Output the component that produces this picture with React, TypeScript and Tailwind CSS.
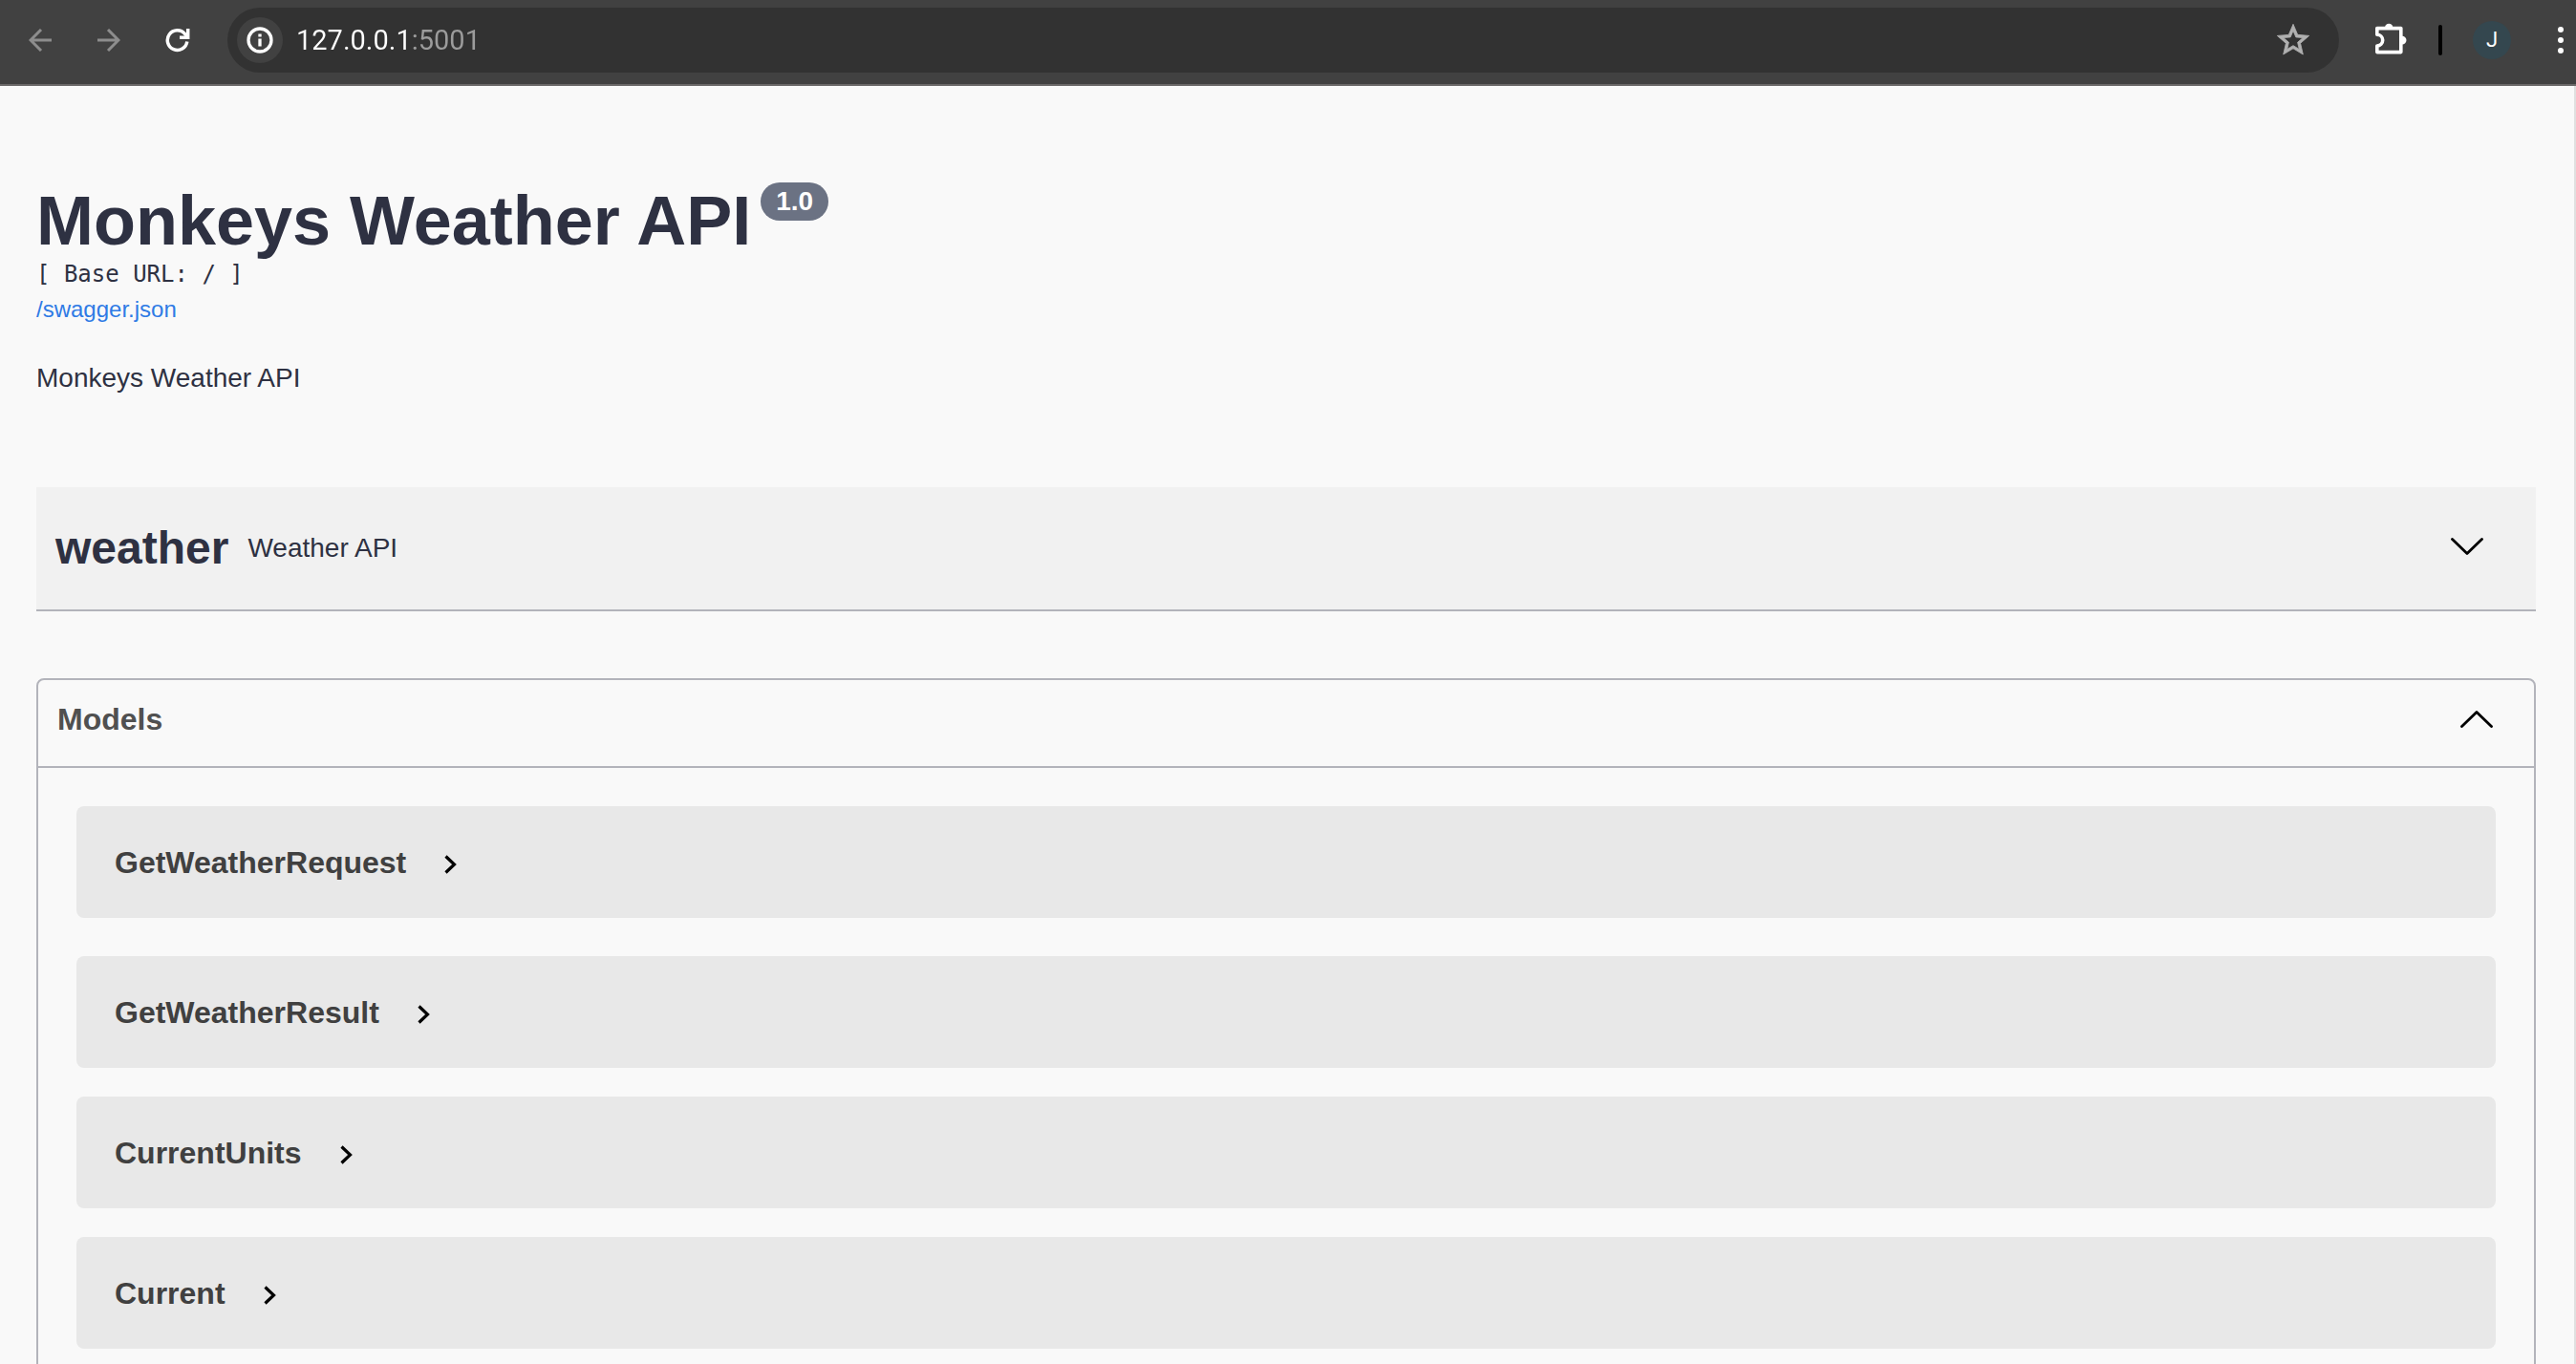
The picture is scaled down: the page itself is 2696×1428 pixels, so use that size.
import { useState } from "react";

const models = ["GetWeatherRequest", "GetWeatherResult", "CurrentUnits", "Current"];

const iconButton = "flex h-12 items-center justify-center";

function BrowserBar() {
  return (
    <header className="flex h-[90px] shrink-0 items-center border-b-2 border-[#6b6969] bg-[#414141] pb-1 pl-[6px]">
      <button aria-label="Back" className={`${iconButton} w-[72px]`}>
        <svg width="24" height="24" viewBox="0 0 24 24" fill="none" stroke="#8d8d8d" strokeWidth="3">
          <path d="M24 12H2.5M13 1L2 12l11 11" />
        </svg>
      </button>
      <button aria-label="Forward" className={`${iconButton} w-[72px]`}>
        <svg width="24" height="24" viewBox="0 0 24 24" fill="none" stroke="#8d8d8d" strokeWidth="3">
          <path d="M0 12h21.500M11 1l11 11-11 11" />
        </svg>
      </button>
      <button aria-label="Reload" className={`${iconButton} w-[72px]`}>
        <svg width="26" height="26" viewBox="0 0 26 26" fill="none" stroke="#ffffff" strokeWidth="3.500">
          <path d="M22.800 14.500A10.300 10.300 0 1 1 20.500 6.500L22.500 8.500" />
          <path d="M23.700 1v9.200h-8.700" />
        </svg>
      </button>
      <div className="ml-4 flex h-[68px] flex-1 items-center rounded-full bg-[#323232] px-[10px]">
        <button aria-label="View site information" className="flex size-12 items-center justify-center rounded-full bg-[#414141]">
          <svg width="28" height="28" viewBox="0 0 28 28" fill="none" stroke="#ffffff" strokeWidth="3.300">
            <circle cx="14" cy="14" r="12" />
            <path d="M14 12.500v8M14 7.500v3" />
          </svg>
        </button>
        <input
          aria-label="Address"
          defaultValue="127.0.0.1:5001"
          className="ml-[14px] min-w-0 flex-1 bg-[linear-gradient(90deg,#ffffff_120px,#9c9c9c_120px)] bg-clip-text font-['Roboto',sans-serif] text-[29px] leading-9 text-transparent caret-white outline-none"
        />
        <button aria-label="Bookmark this tab" className={`${iconButton} mr-[14px] w-12`}>
          <svg width="40" height="40" viewBox="0 0 24 24" fill="#b0b0b0" stroke="#b0b0b0" strokeWidth="0.500">
            <path d="M22 9.240l-7.190-.62L12 2 9.190 8.630 2 9.240l5.460 4.730L5.820 21 12 17.270 18.180 21l-1.630-7.030L22 9.240zM12 15.400l-3.760 2.270 1-4.280-3.320-2.880 4.380-.38L12 6.100l1.710 4.040 4.380.38-3.320 2.880 1 4.280L12 15.400z" />
          </svg>
        </button>
      </div>
      <button aria-label="Extensions" className={`${iconButton} ml-[30px] w-12`}>
        <svg width="48" height="48" viewBox="0 0 48 48" fill="none" stroke="#ffffff" strokeWidth="3.600" strokeLinejoin="round">
          <path d="M9.800 11.600h25v25h-25v-6.600a5.800 5.800 0 0 0 0-11.800z" />
          <path d="M18 10.500a4.300 4.800 0 0 1 8.400 0zM36 19.800a4.500 4.300 0 0 1 0 8.600z" fill="#ffffff" stroke="none" />
        </svg>
      </button>
      <div className="ml-[26px] h-8 w-1 rounded-full bg-black" />
      <button aria-label="Profile" className="ml-8 size-10 rounded-full bg-[#34474f] font-['Roboto',sans-serif] text-[22px] leading-10 text-white">
        J
      </button>
      <button aria-label="Menu" className={`${iconButton} ml-9 w-8`}>
        <svg width="6" height="28" viewBox="0 0 6 28" fill="#ffffff">
          <circle cx="3" cy="3" r="3" />
          <circle cx="3" cy="14" r="3" />
          <circle cx="3" cy="25" r="3" />
        </svg>
      </button>
    </header>
  );
}

function Chevron({ up = false }: { up?: boolean }) {
  return (
    <svg width="34" height="18" viewBox="0 0 34 18" fill="none" stroke="#000000" strokeWidth="2.800" strokeLinecap="round" strokeLinejoin="round">
      <path d={up ? "M1.500 16.500L17 1.500l15.500 15" : "M1.500 1.500L17 16.500l15.500-15"} />
    </svg>
  );
}

function ModelRow({ name }: { name: string }) {
  return (
    <li className="flex h-[117px] items-center rounded-lg bg-[#e8e8e8] px-10 first:mb-[10px]">
      <button className="flex items-center gap-10 text-[32px] leading-9 font-bold text-[#404040]">
        {name}
        <svg width="13" height="20" viewBox="0 0 13 20" fill="none" stroke="#000000" strokeWidth="3.200" className="mt-1">
          <path d="M1.500 1.500L10.500 10l-9 8.500" />
        </svg>
      </button>
    </li>
  );
}

export default function App() {
  const [open, setOpen] = useState(true);
  return (
    <div className="flex h-screen flex-col overflow-hidden bg-[#f9f9f9] font-['Liberation_Sans',Arial,sans-serif] text-[#2e3142]">
      <BrowserBar />
      <main className="min-h-0 flex-1 overflow-hidden border-r-2 border-[#e0e0e0] pr-10 pl-[38px]">
        <section className="pt-[100px]">
          <div className="flex items-start gap-[10px]">
            <h1 className="text-[72px] leading-[82px] font-bold">Monkeys Weather API</h1>
            <span className="mt-[1px] rounded-full bg-[#6b7283] px-4 text-[28px] leading-10 font-bold text-white">1.0</span>
          </div>
          <pre className="font-['DejaVu_Sans_Mono',monospace] text-[24px] leading-[30px]">[ Base URL: / ]</pre>
          <a href="/swagger.json" className="mt-2 block w-fit text-[24px] leading-7 text-[#2f7be5]">/swagger.json</a>
          <p className="mt-10 text-[28px] leading-9">Monkeys Weather API</p>
        </section>

        <section className="mt-24 flex h-[130px] items-center border-b-2 border-[#b3b4bb] bg-[#f1f1f1] pr-[55px] pl-5">
          <h2 className="text-[48px] leading-[56px] font-bold">weather</h2>
          <p className="ml-5 flex-1 text-[28px] leading-8">Weather API</p>
          <button aria-label="Expand weather" className="pb-1">
            <Chevron />
          </button>
        </section>

        <section className="mt-[70px] rounded-lg border-2 border-[#b3b4bb]">
          <h2 className="border-b-2 border-[#b3b4bb] text-[32px] font-bold text-[#505050]">
            <button className="flex h-[90px] w-full items-center justify-between pr-[43px] pb-2 pl-5" onClick={() => setOpen(!open)}>
              <span className="leading-9">Models</span>
              <Chevron up={open} />
            </button>
          </h2>
          {open && (
            <ul className="flex flex-col gap-[30px] px-10 pt-10 pb-10">
              {models.map((name) => (
                <ModelRow key={name} name={name} />
              ))}
            </ul>
          )}
        </section>
      </main>
    </div>
  );
}
